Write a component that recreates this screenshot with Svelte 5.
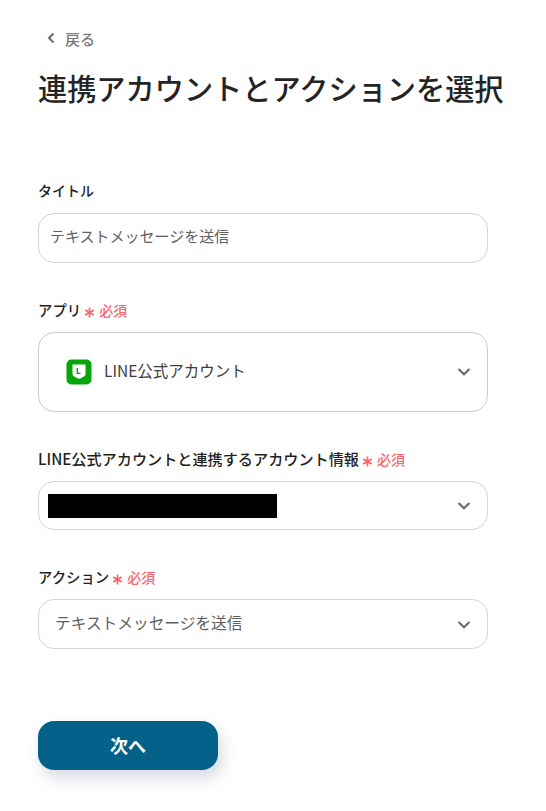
<script>
  const fields = [
    { label: 'アプリ', cls: 'app' },
    { label: 'LINE公式アカウントと連携するアカウント情報', cls: 'account' },
    { label: 'アクション', cls: 'action' }
  ];
</script>

<main class="page">
  <a class="back" href="#back">
    <svg width="10" height="12" viewBox="0 0 10 12"><path d="M7.500 1.500 3 6l4.500 4.500" fill="none" stroke="#6f6f6f" stroke-width="2.100"/></svg>
    <span>戻る</span>
  </a>
  <h1>連携アカウントとアクションを選択</h1>

  <section class="field title-field">
    <div class="label"><span>タイトル</span></div>
    <div class="input"><span class="nudge more">テキストメッセージを送信</span></div>
  </section>

  {#each fields as f}
    <section class="field {f.cls}">
      <div class="label">
        <span>{f.label}</span>
        <svg class="star" width="11" height="11" viewBox="0 0 11 11">
          <path d="M5.500 0.500v10M1.200 3l8.600 5M9.800 3l-8.600 5" fill="none" stroke="#f9656f" stroke-width="1.700"/>
        </svg>
        <em>必須</em>
      </div>
      <div class="select">
        {#if f.cls === 'app'}
          <svg class="logo" width="26" height="26" viewBox="0 0 26 26">
            <rect x="0.5" y="0.5" width="25" height="25" rx="5" fill="#06a50a"/>
            <path d="M6.500 5.500h13v9.500c0 2-3.500 3.800-6.500 4.800-3-1-6.500-2.800-6.500-4.800z" fill="#fff"/>
            <path d="M11.300 9v5.400h3.200" fill="none" stroke="#06a50a" stroke-width="1.400"/>
          </svg>
          <span class="value nudge more">LINE公式アカウント</span>
        {:else if f.cls === 'account'}
          <span class="mask"></span>
        {:else}
          <span class="value muted nudge">テキストメッセージを送信</span>
        {/if}
        <svg class="chev" width="14" height="10" viewBox="0 0 14 10"><path d="M1.500 2 7 7.200 12.500 2" fill="none" stroke="#6b6b6b" stroke-width="2.200"/></svg>
      </div>
    </section>
  {/each}

  <button class="next"><span class="nudge">次へ</span></button>
</main>

<style>
  :global(body) {
    margin: 0;
    background: #fff;
    font-family: "Noto Sans CJK JP", "Noto Sans", sans-serif;
    color: #1f1f1f;
  }
  .page {
    box-sizing: border-box;
    width: 546px;
    height: 811px;
    padding: 28px 40px 0 38px;
    overflow: hidden;
  }
  .back {
    display: flex;
    align-items: center;
    gap: 9px;
    height: 20px;
    padding-left: 8px;
    color: #7a7a7a;
    font-size: 15px;
    font-weight: 500;
    text-decoration: none;
  }
  h1 {
    margin: 16px 0 0;
    font-size: 29.2px;
    line-height: 46px;
    font-weight: 500;
    white-space: nowrap;
    color: #242424;
  }
  .field { width: 450px; }
  .label {
    display: flex;
    align-items: center;
    height: 20px;
    font-size: 15.15px;
    font-weight: 500;
    white-space: nowrap;
  }
  .label span { margin-bottom: 2px; }
  .title-field .label { font-size: 14px; }
  .app .label, .action .label { font-size: 14.4px; }
  .star {
    flex: none;
    margin: 4px 0 0 3px;
  }
  .label em {
    margin-left: 4px;
    font-style: normal;
    font-size: 14px;
    color: #f9656f;
  }
  .nudge { margin-bottom: 3px; }
  .more { margin-bottom: 5px; }
  .title-field { margin-top: 71px; }
  .input {
    box-sizing: border-box;
    height: 50px;
    margin-top: 12px;
    padding: 0 11px;
    display: flex;
    align-items: center;
    border: 1px solid #d3d5de;
    border-radius: 16px;
    font-size: 15px;
    color: #5f5f5f;
  }
  .select {
    box-sizing: border-box;
    display: flex;
    align-items: center;
    border: 1px solid #d3d5de;
    border-radius: 16px;
    height: 50px;
  }
  .app { margin-top: 37px; }
  .app .select { height: 80px; margin-top: 12px; padding-left: 27px; border-color: #cccccc; }
  .account { margin-top: 37px; }
  .account .select { height: 49px; margin-top: 12px; padding-left: 9px; }
  .action { margin-top: 37px; }
  .action .select { margin-top: 12px; padding-left: 16px; }
  .action .chev { margin-top: 2px; }
  .logo { flex: none; }
  .value { margin-left: 12px; font-size: 15.5px; color: #3d3d3d; }
  .muted { margin-left: 0; font-size: 15.7px; color: #5f5f5f; }
  .mask {
    width: 229px;
    height: 24px;
    background: #000;
  }
  .chev { flex: none; margin-left: auto; margin-right: 16px; }
  .next {
    display: block;
    width: 180px;
    height: 49px;
    margin-top: 72px;
    border: none;
    border-radius: 16px;
    background: #04628a;
    color: #fff;
    font-family: inherit;
    font-size: 18px;
    font-weight: 700;
    box-shadow: 4px 8px 16px rgba(30, 50, 90, 0.18);
  }
  .next .nudge { display: block; margin-bottom: 2px; }
</style>
